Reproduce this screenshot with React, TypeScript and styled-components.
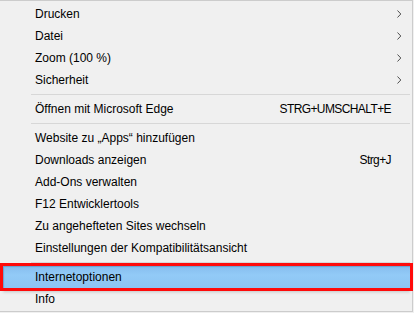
import styled, { createGlobalStyle } from 'styled-components';

const GlobalStyle = createGlobalStyle`
  html, body {
    margin: 0;
    padding: 0;
    background: #f0f0f0;
    overflow: hidden;
  }
`;

type Entry =
  | { kind: 'item'; label: string; shortcut?: string; submenu?: boolean; active?: boolean }
  | { kind: 'sep' };

const entries: Entry[] = [
  { kind: 'item', label: 'Drucken', submenu: true },
  { kind: 'item', label: 'Datei', submenu: true },
  { kind: 'item', label: 'Zoom (100 %)', submenu: true },
  { kind: 'item', label: 'Sicherheit', submenu: true },
  { kind: 'sep' },
  { kind: 'item', label: 'Öffnen mit Microsoft Edge', shortcut: 'STRG+UMSCHALT+E' },
  { kind: 'sep' },
  { kind: 'item', label: 'Website zu „Apps“ hinzufügen' },
  { kind: 'item', label: 'Downloads anzeigen', shortcut: 'Strg+J' },
  { kind: 'item', label: 'Add-Ons verwalten' },
  { kind: 'item', label: 'F12 Entwicklertools' },
  { kind: 'item', label: 'Zu angehefteten Sites wechseln' },
  { kind: 'item', label: 'Einstellungen der Kompatibilitätsansicht' },
  { kind: 'sep' },
  { kind: 'item', label: 'Internetoptionen', active: true },
  { kind: 'item', label: 'Info' },
];

const Menu = styled.div`
  box-sizing: border-box;
  width: 413px;
  height: 312px;
  padding: 2px 0 0 0;
  background: #f0f0f0;
  border-top: 1px solid #cccccc;
  border-right: 1px solid #cccccc;
  border-bottom: 1px solid #cccccc;
  display: flex;
  flex-direction: column;
  font-family: "Liberation Sans", Arial, sans-serif;
  font-size: 12px;
  color: #000;
`;

const Item = styled.div<{ $active?: boolean }>`
  box-sizing: border-box;
  height: 22px;
  flex: none;
  display: grid;
  grid-template-columns: 1fr auto 19px;
  align-items: center;
  margin: 0 2px 0 3px;
  padding-left: 32px;
  background: ${({ $active }) =>
    $active ? 'linear-gradient(#86bdee, #92caf7 40%, #8dc4f3)' : 'transparent'};
  outline: ${({ $active }) => ($active ? '3px solid #ff0a0a' : 'none')};
  box-shadow: ${({ $active }) =>
    $active ? 'inset 1px 1px 1px #6a9fd0, 0 4px 3px rgba(0,0,0,0.18)' : 'none'};
`;

const Label = styled.span`
  white-space: nowrap;
`;

const Shortcut = styled.span`
  white-space: nowrap;
  text-align: right;
  letter-spacing: -0.6px;
`;

const Arrow = styled.span`
  display: flex;
  justify-content: flex-end;
  padding-right: 8px;
`;

const Separator = styled.div`
  flex: none;
  height: 7px;
  display: flex;
  align-items: center;
  padding-left: 31px;
  padding-right: 2px;

  &::after {
    content: '';
    flex: 1;
    height: 1px;
    background: #d7d7d7;
  }
`;

const Chevron = () => (
  <svg width="5" height="8" viewBox="0 0 5 8">
    <polyline points="0.5,0.5 3.8,4 0.5,7.5" fill="none" stroke="#505050" strokeWidth="1" />
  </svg>
);

export default function App() {
  return (
    <>
      <GlobalStyle />
      <Menu>
        {entries.map((e, i) =>
          e.kind === 'sep' ? (
            <Separator key={i} />
          ) : (
            <Item key={i} $active={e.active}>
              <Label>{e.label}</Label>
              <Shortcut>{e.shortcut ?? ''}</Shortcut>
              <Arrow>{e.submenu ? <Chevron /> : null}</Arrow>
            </Item>
          )
        )}
      </Menu>
    </>
  );
}
